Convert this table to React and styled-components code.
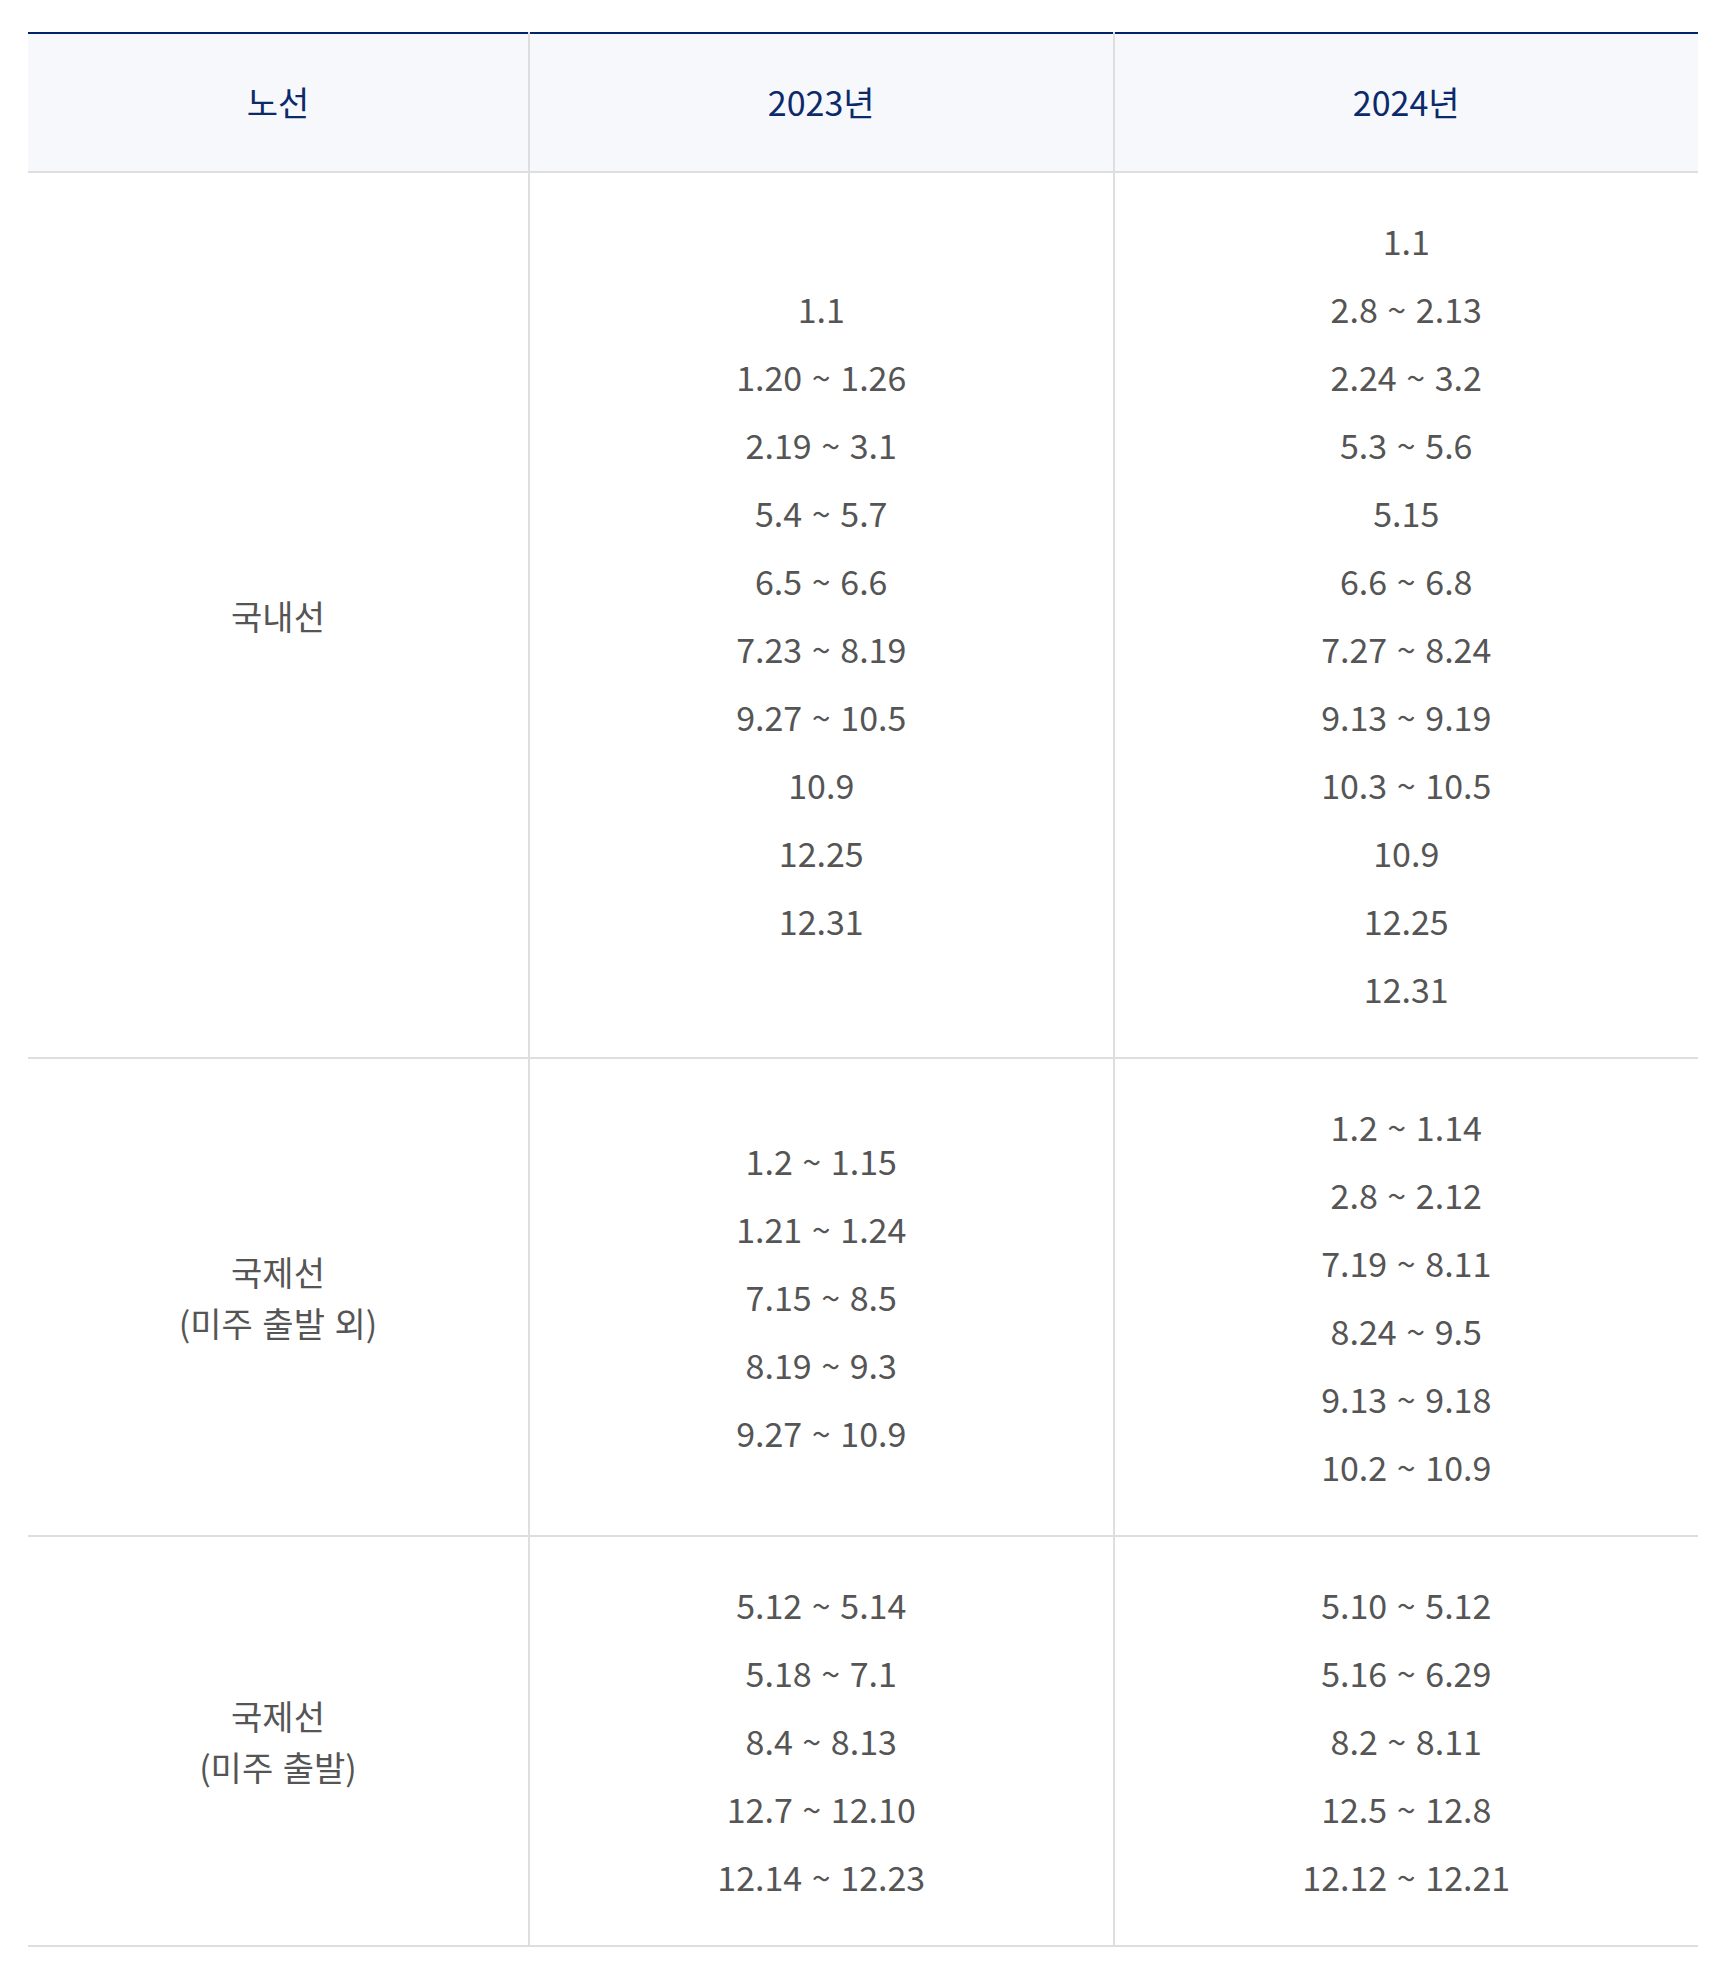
import React from "react";
import styled, { createGlobalStyle } from "styled-components";

const GlobalStyle = createGlobalStyle`
  body {
    margin: 0;
    background: #fff;
    font-family: "Noto Sans CJK KR", "Noto Sans", sans-serif;
  }
`;

const Wrap = styled.div`
  padding: 32px 28px 20px;
`;

const Table = styled.table`
  width: 100%;
  border-collapse: collapse;
  table-layout: fixed;
  border-top: 2px solid #002369;
`;

const Col = styled.col`
  width: ${(p) => p.w};
`;

const Th = styled.th`
  background: #f7f8fc;
  color: #0c2a6a;
  font-size: 34px;
  font-weight: 400;
  line-height: 68px;
  padding: 34px 0 35px;
  text-align: center;
  border-bottom: 2px solid #dedede;
  & + & {
    border-left: 2px solid #dedede;
  }
`;

const Td = styled.td`
  color: #555;
  font-size: 34px;
  line-height: ${(p) => (p.$label ? "51px" : "68px")};
  word-spacing: 2px;
  padding: 34px 0;
  text-align: center;
  vertical-align: middle;
  border-bottom: 2px solid #dedede;
  & + & {
    border-left: 2px solid #dedede;
  }
`;

const Item = styled.p`
  margin: 0;
`;

const rows = [
  {
    label: ["국내선"],
    y2023: [
      "1.1",
      "1.20 ~ 1.26",
      "2.19 ~ 3.1",
      "5.4 ~ 5.7",
      "6.5 ~ 6.6",
      "7.23 ~ 8.19",
      "9.27 ~ 10.5",
      "10.9",
      "12.25",
      "12.31",
    ],
    y2024: [
      "1.1",
      "2.8 ~ 2.13",
      "2.24 ~ 3.2",
      "5.3 ~ 5.6",
      "5.15",
      "6.6 ~ 6.8",
      "7.27 ~ 8.24",
      "9.13 ~ 9.19",
      "10.3 ~ 10.5",
      "10.9",
      "12.25",
      "12.31",
    ],
  },
  {
    label: ["국제선", "(미주 출발 외)"],
    y2023: ["1.2 ~ 1.15", "1.21 ~ 1.24", "7.15 ~ 8.5", "8.19 ~ 9.3", "9.27 ~ 10.9"],
    y2024: [
      "1.2 ~ 1.14",
      "2.8 ~ 2.12",
      "7.19 ~ 8.11",
      "8.24 ~ 9.5",
      "9.13 ~ 9.18",
      "10.2 ~ 10.9",
    ],
  },
  {
    label: ["국제선", "(미주 출발)"],
    y2023: ["5.12 ~ 5.14", "5.18 ~ 7.1", "8.4 ~ 8.13", "12.7 ~ 12.10", "12.14 ~ 12.23"],
    y2024: ["5.10 ~ 5.12", "5.16 ~ 6.29", "8.2 ~ 8.11", "12.5 ~ 12.8", "12.12 ~ 12.21"],
  },
];

const List = ({ items }) => (
  <>
    {items.map((t, i) => (
      <Item key={i}>{t}</Item>
    ))}
  </>
);

const App = () => {
  return (
    <>
      <GlobalStyle />
      <Wrap>
        <Table>
          <colgroup>
            <Col w="30%" />
            <Col w="35%" />
            <Col w="35%" />
          </colgroup>
          <thead>
            <tr>
              <Th>노선</Th>
              <Th>2023년</Th>
              <Th>2024년</Th>
            </tr>
          </thead>
          <tbody>
            {rows.map((row, i) => (
              <tr key={i}>
                <Td $label>
                  <List items={row.label} />
                </Td>
                <Td>
                  <List items={row.y2023} />
                </Td>
                <Td>
                  <List items={row.y2024} />
                </Td>
              </tr>
            ))}
          </tbody>
        </Table>
      </Wrap>
    </>
  );
};

export default App;
